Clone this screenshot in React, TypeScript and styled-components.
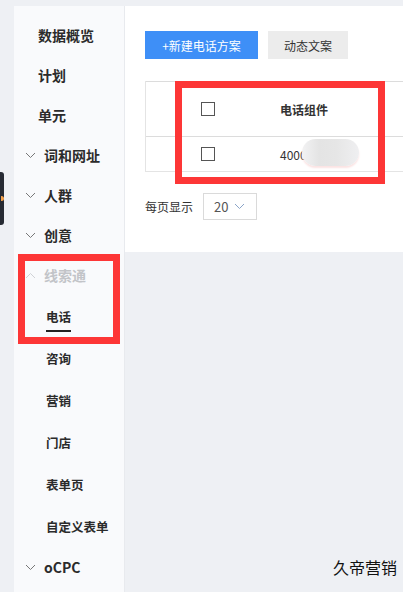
import React from "react";
import styled, { createGlobalStyle } from "styled-components";

const GlobalStyle = createGlobalStyle`
  html, body {
    margin: 0;
    padding: 0;
    background: #eef0f4;
    font-family: "Noto Sans CJK SC", "Noto Sans", sans-serif;
    color: #333;
  }
  * { box-sizing: border-box; }
`;

const Page = styled.div`
  position: relative;
  display: flex;
  width: 403px;
  height: 592px;
  padding-top: 6px;
  overflow: hidden;
`;

const Gutter = styled.div`
  width: 14px;
  flex-shrink: 0;
  padding-top: 166px;
`;

const Handle = styled.div`
  width: 4px;
  height: 53px;
  background: #262a33;
  border-radius: 0 3px 3px 0;
  display: flex;
  align-items: center;
  justify-content: center;
`;

const HandleDot = styled.div`
  width: 3px;
  height: 5px;
  border-radius: 0 3px 3px 0;
  background: #f3a04a;
`;

const Sidebar = styled.nav`
  width: 111px;
  flex-shrink: 0;
  background: #f9fafc;
  border-right: 1px solid #e8eaee;
  padding-top: 9px;
  display: flex;
  flex-direction: column;
`;

const MenuItem = styled.div<{ $muted?: boolean; $child?: boolean }>`
  height: ${({ $child }) => ($child ? 42 : 40)}px;
  display: flex;
  align-items: center;
  padding-left: ${({ $child }) => ($child ? 32 : 11)}px;
  font-size: ${({ $child }) => ($child ? 12.5 : 14)}px;
  font-weight: 700;
  color: ${({ $muted }) => ($muted ? "#c2c4c8" : "#2b2b2b")};
`;

const Arrow = styled.span`
  width: 13px;
  margin-right: 6px;
  display: inline-flex;
  align-items: center;
`;

const Plain = styled.span`
  padding-left: 13px;
`;

const Active = styled.span`
  position: relative;
  &::after {
    content: "";
    position: absolute;
    left: 0;
    right: 0;
    bottom: -6px;
    height: 2px;
    background: #222;
  }
`;

const Main = styled.main`
  flex: 1;
  display: flex;
  flex-direction: column;
`;

const Panel = styled.section`
  background: #fff;
  height: 246px;
  padding: 25px 0 0 20px;
`;

const Toolbar = styled.div`
  display: flex;
  gap: 10px;
`;

const Button = styled.button<{ $primary?: boolean }>`
  width: ${({ $primary }) => ($primary ? 113 : 80)}px;
  height: 28px;
  border: none;
  border-radius: 0;
  padding: 0;
  font-family: inherit;
  font-size: 12px;
  background: ${({ $primary }) => ($primary ? "#3e8ff7" : "#ececec")};
  color: ${({ $primary }) => ($primary ? "#fff" : "#333")};
`;

const Table = styled.div`
  margin-top: 22px;
  border-left: 1px solid #e4e4e4;
`;

const Row = styled.div<{ $head?: boolean }>`
  height: ${({ $head }) => ($head ? 55 : 36)}px;
  display: flex;
  align-items: center;
  padding-left: 55px;
  border-top: 1px solid #dcdcdc;
  border-bottom: ${({ $head }) => ($head ? "none" : "1px solid #e4e4e4")};
  font-size: 12px;
  font-weight: ${({ $head }) => ($head ? 700 : 400)};
  color: #333;
`;

const Check = styled.span`
  width: 14px;
  height: 14px;
  border: 1.5px solid #555;
  flex-shrink: 0;
  margin-right: 65px;
`;

const Pager = styled.div`
  margin-top: 21px;
  display: flex;
  align-items: center;
  font-size: 12px;
  color: #333;
`;

const Select = styled.div`
  margin-left: 10px;
  width: 54px;
  height: 27px;
  border: 1px solid #dadada;
  display: flex;
  align-items: center;
  padding-left: 10px;
  gap: 6px;
  font-size: 13px;
  color: #555;
`;

const Mark = styled.div<{ $x: number; $y: number; $w: number; $h: number }>`
  position: absolute;
  left: ${({ $x }) => $x}px;
  top: ${({ $y }) => $y}px;
  width: ${({ $w }) => $w}px;
  height: ${({ $h }) => $h}px;
  border: 7px solid #fd3636;
`;

const Blur = styled.div`
  position: absolute;
  left: 302px;
  top: 139px;
  width: 57px;
  height: 27px;
  border-radius: 14px;
  background: linear-gradient(90deg, #f2f2f3 0%, #e4e4e4 30%, #e6e6e6 60%, #efeff1 100%);
  box-shadow: 0 2px 2px #fbe3e3;
`;

const Watermark = styled.div`
  position: absolute;
  right: 6px;
  top: 555px;
  font-size: 16px;
  color: #111;
`;

const Chevron = ({ up, color }: { up?: boolean; color: string }) => (
  <svg width="11" height="7" viewBox="0 0 11 7">
    <polyline
      points={up ? "1,6 5.5,1.5 10,6" : "1,1 5.5,5.5 10,1"}
      fill="none"
      stroke={color}
      strokeWidth="1"
    />
  </svg>
);

const App: React.FC = () => {
  return (
    <>
      <GlobalStyle />
      <Page>
        <Gutter>
          <Handle>
            <HandleDot />
          </Handle>
        </Gutter>
        <Sidebar>
          <MenuItem><Plain>数据概览</Plain></MenuItem>
          <MenuItem><Plain>计划</Plain></MenuItem>
          <MenuItem><Plain>单元</Plain></MenuItem>
          <MenuItem><Arrow><Chevron color="#777" /></Arrow>词和网址</MenuItem>
          <MenuItem><Arrow><Chevron color="#777" /></Arrow>人群</MenuItem>
          <MenuItem><Arrow><Chevron color="#777" /></Arrow>创意</MenuItem>
          <MenuItem $muted><Arrow><Chevron up color="#d0d2d6" /></Arrow>线索通</MenuItem>
          <MenuItem $child><Active>电话</Active></MenuItem>
          <MenuItem $child>咨询</MenuItem>
          <MenuItem $child>营销</MenuItem>
          <MenuItem $child>门店</MenuItem>
          <MenuItem $child>表单页</MenuItem>
          <MenuItem $child>自定义表单</MenuItem>
          <MenuItem><Arrow><Chevron color="#777" /></Arrow>oCPC</MenuItem>
        </Sidebar>
        <Main>
          <Panel>
            <Toolbar>
              <Button $primary>+新建电话方案</Button>
              <Button>动态文案</Button>
            </Toolbar>
            <Table>
              <Row $head>
                <Check />
                电话组件
              </Row>
              <Row>
                <Check />
                4000
              </Row>
            </Table>
            <Pager>
              每页显示
              <Select>
                20
                <Chevron color="#8aa4c8" />
              </Select>
            </Pager>
          </Panel>
        </Main>
        <Blur />
        <Mark $x={175} $y={81} $w={210} $h={103} />
        <Mark $x={18} $y={254} $w={102} $h={90} />
        <Watermark>久帝营销</Watermark>
      </Page>
    </>
  );
};

export default App;
